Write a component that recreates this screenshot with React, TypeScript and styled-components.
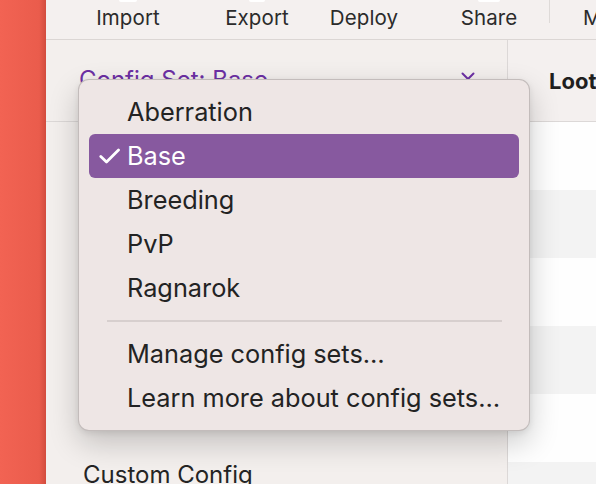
import React from "react";
import styled, { createGlobalStyle } from "styled-components";

const Global = createGlobalStyle`
  html, body { margin: 0; padding: 0; }
  body { font-family: Inter, "Noto Sans", sans-serif; -webkit-font-smoothing: antialiased; }
`;

const Window = styled.div`
  position: relative;
  width: 596px;
  height: 484px;
  display: flex;
  overflow: hidden;
  background: #f3efee;
`;

const RedStrip = styled.div`
  width: 46px;
  flex: none;
  background: linear-gradient(to right, #f26353, #ea5c4c 85%, #d24c3e);
`;

const Main = styled.div`
  flex: 1;
  display: flex;
  flex-direction: column;
  min-width: 0;
`;

const Toolbar = styled.div`
  height: 39px;
  flex: none;
  display: flex;
  align-items: flex-start;
  background: #f4f0ef;
  border-bottom: 1px solid #dbd6d4;
  white-space: nowrap;
`;

const ToolButton = styled.div<{ $ml: number; $w?: number }>`
  margin-left: ${(p) => p.$ml}px;
  width: ${(p) => (p.$w ? `${p.$w}px` : "auto")};
  flex: none;
  display: flex;
  flex-direction: column;
  align-items: center;
`;

const IconTail = styled.div<{ $w: number }>`
  width: ${(p) => p.$w}px;
  height: 2px;
  background: #ffffff;
  border-radius: 0 0 2px 2px;
`;

const ToolLabel = styled.div`
  margin-top: 4px;
  font-size: 20.5px;
  line-height: 24px;
  color: #2b2b2b;
  letter-spacing: 0.1px;
`;

const ToolSeparator = styled.div<{ $ml: number }>`
  margin-left: ${(p) => p.$ml}px;
  width: 1px;
  height: 23px;
  background: #dedad8;
  flex: none;
`;

const Content = styled.div`
  flex: 1;
  display: flex;
  min-height: 0;
`;

const Sidebar = styled.div`
  width: 461px;
  flex: none;
  display: flex;
  flex-direction: column;
  background: #f3efed;
  border-right: 1px solid #dcd8d7;
`;

const ConfigHeader = styled.div`
  height: 82px;
  flex: none;
  display: flex;
  align-items: center;
  justify-content: space-between;
  padding: 0 32px 0 33px;
  border-bottom: 1px solid #dcd8d7;
  box-sizing: border-box;
`;

const ConfigLabel = styled.div`
  font-size: 24px;
  color: #6c30a4;
  margin-top: -3px;
`;

const Chevron = styled.svg`
  width: 14px;
  height: 9px;
  margin-top: -8px;
`;

const SidebarItem = styled.div<{ $mt: number }>`
  margin-top: ${(p) => p.$mt}px;
  padding-left: 37px;
  font-size: 24px;
  line-height: 28px;
  color: #242424;
`;

const RightPanel = styled.div`
  flex: 1;
  display: flex;
  flex-direction: column;
  min-width: 0;
`;

const PanelHeader = styled.div`
  height: 82px;
  flex: none;
  box-sizing: border-box;
  display: flex;
  align-items: center;
  padding-left: 41px;
  background: #f4f0ef;
  border-bottom: 1px solid #dcd8d7;
  white-space: nowrap;
`;

const PanelTitle = styled.div`
  font-size: 22px;
  font-weight: 700;
  color: #1f1f1f;
`;

const Stripe = styled.div<{ $alt: boolean }>`
  height: 68px;
  flex: none;
  background: ${(p) => (p.$alt ? "#f3f3f3" : "#fefefe")};
`;

const Menu = styled.div`
  position: absolute;
  left: 78px;
  top: 79px;
  width: 452px;
  box-sizing: border-box;
  padding: 10px 10px;
  background: #eee6e5;
  border: 1px solid rgba(0, 0, 0, 0.18);
  border-radius: 11px;
  box-shadow: 0 12px 30px rgba(0, 0, 0, 0.2), 0 2px 6px rgba(0, 0, 0, 0.08);
  display: flex;
  flex-direction: column;
`;

const MenuItem = styled.div<{ $selected?: boolean }>`
  height: 44px;
  display: flex;
  align-items: center;
  border-radius: 6px;
  background: ${(p) => (p.$selected ? "#87599f" : "transparent")};
  color: ${(p) => (p.$selected ? "#ffffff" : "#232323")};
  font-size: 25.3px;
  white-space: nowrap;
`;

const CheckSlot = styled.div`
  width: 38px;
  flex: none;
  display: flex;
  justify-content: flex-end;
  padding-right: 7px;
  box-sizing: border-box;
`;

const MenuText = styled.span`
  margin-top: -1px;
`;

const MenuSeparator = styled.div`
  height: 22px;
  display: flex;
  align-items: center;
  padding: 0 17px 0 18px;
  &::after {
    content: "";
    flex: 1;
    height: 2px;
    background: #d7cfce;
  }
`;

const items = ["Aberration", "Base", "Breeding", "PvP", "Ragnarok"];

export default function App() {
  return (
    <>
      <Global />
      <Window>
        <RedStrip />
        <Main>
          <Toolbar>
            <ToolButton $ml={37} $w={90}>
              <IconTail $w={18} />
              <ToolLabel>Import</ToolLabel>
            </ToolButton>
            <ToolButton $ml={39} $w={90}>
              <IconTail $w={16} />
              <ToolLabel>Export</ToolLabel>
            </ToolButton>
            <ToolButton $ml={17} $w={90}>
              <IconTail $w={0} />
              <ToolLabel>Deploy</ToolLabel>
            </ToolButton>
            <ToolButton $ml={35} $w={90}>
              <IconTail $w={22} />
              <ToolLabel>Share</ToolLabel>
            </ToolButton>
            <ToolSeparator $ml={15} />
            <ToolButton $ml={33}>
              <IconTail $w={0} />
              <ToolLabel>Mods</ToolLabel>
            </ToolButton>
          </Toolbar>
          <Content>
            <Sidebar>
              <ConfigHeader>
                <ConfigLabel>Config Set: Base</ConfigLabel>
                <Chevron viewBox="0 0 14 9">
                  <path d="M1.5 1.5 L7 7 L12.5 1.5" fill="none" stroke="#6c30a4" strokeWidth="2" strokeLinecap="round" strokeLinejoin="round" />
                </Chevron>
              </ConfigHeader>
              <SidebarItem $mt={339}>Custom Config</SidebarItem>
            </Sidebar>
            <RightPanel>
              <PanelHeader>
                <PanelTitle>Loot Drops</PanelTitle>
              </PanelHeader>
              {[0, 1, 2, 3, 4, 5].map((i) => (
                <Stripe key={i} $alt={i % 2 === 1} />
              ))}
            </RightPanel>
          </Content>
        </Main>
        <Menu>
          {items.map((name) => (
            <MenuItem key={name} $selected={name === "Base"}>
              <CheckSlot>
                {name === "Base" && (
                  <svg width="21" height="16" viewBox="0 0 21 16">
                    <path d="M1.8 8.5 L7.5 14 L19.5 2" fill="none" stroke="#ffffff" strokeWidth="2.8" strokeLinecap="round" strokeLinejoin="round" />
                  </svg>
                )}
              </CheckSlot>
              <MenuText>{name}</MenuText>
            </MenuItem>
          ))}
          <MenuSeparator />
          <MenuItem>
            <CheckSlot />
            <MenuText>Manage config sets…</MenuText>
          </MenuItem>
          <MenuItem>
            <CheckSlot />
            <MenuText>Learn more about config sets…</MenuText>
          </MenuItem>
        </Menu>
      </Window>
    </>
  );
}
